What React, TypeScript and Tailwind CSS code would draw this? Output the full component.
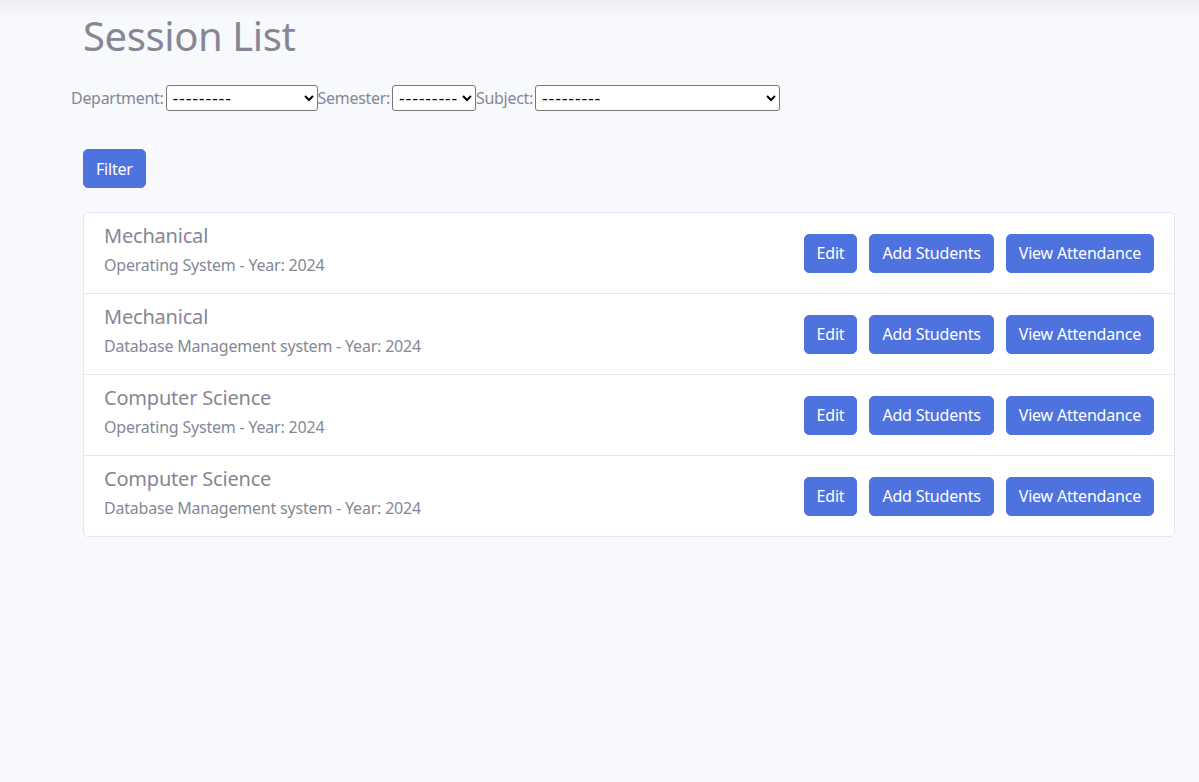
const sessions = [
  { dept: 'Mechanical', subject: 'Operating System', year: 2024 },
  { dept: 'Mechanical', subject: 'Database Management system', year: 2024 },
  { dept: 'Computer Science', subject: 'Operating System', year: 2024 },
  { dept: 'Computer Science', subject: 'Database Management system', year: 2024 },
];

const selectCls =
  "h-[26px] bg-white border border-[#767676] rounded-[3px] text-black text-base leading-5 pl-[2px] font-['DejaVu_Sans',sans-serif] tracking-[0.8px]";

const btnCls =
  'bg-[#4e73df] text-white text-base leading-6 px-3 py-[6.5px] rounded-[5px] border border-[#4e73df] tracking-[-0.2px]';

export default function App() {
  return (
    <div className="min-h-[782px] bg-[#f8f9fc] bg-[linear-gradient(to_bottom,#eceef3_0px,#f8f9fc_18px)] text-[#858796] font-['Noto_Sans',sans-serif]">
      <div className="pl-[83px] pr-[24px] pt-3">
        <h1 className="text-[40px] leading-[48px] font-normal mb-[25px] tracking-[-0.4px]">Session List</h1>

        <form className="-ml-3 flex items-center text-base leading-6 tracking-[-0.3px]">
          <label htmlFor="department" className="mr-[2px]">Department:</label>
          <select id="department" className={`${selectCls} w-[152px]`}>
            <option>---------</option>
          </select>
          <label htmlFor="semester" className="mr-[2px]">Semester:</label>
          <select id="semester" className={`${selectCls} w-[84px]`}>
            <option>---------</option>
          </select>
          <label htmlFor="subject" className="mr-[2px]">Subject:</label>
          <select id="subject" className={`${selectCls} w-[245px]`}>
            <option>---------</option>
          </select>
        </form>

        <button className={`${btnCls} mt-[38px]`}>Filter</button>

        <ul className="mt-6 bg-white border border-[#e3e6f0] rounded-[5px]">
          {sessions.map((s, i) => (
            <li
              key={i}
              className={`flex items-center justify-between px-5 pt-[11px] pb-4 ${i > 0 ? 'border-t border-[#e3e6f0]' : ''}`}
            >
              <div className="tracking-[-0.2px]">
                <h5 className="text-xl leading-6 mb-[5px]">{s.dept}</h5>
                <p className="text-base leading-6">
                  {s.subject} - Year: {s.year}
                </p>
              </div>
              <div className="flex gap-3 mt-[5px]">
                <button className={btnCls}>Edit</button>
                <button className={btnCls}>Add Students</button>
                <button className={btnCls}>View Attendance</button>
              </div>
            </li>
          ))}
        </ul>
      </div>
    </div>
  );
}
